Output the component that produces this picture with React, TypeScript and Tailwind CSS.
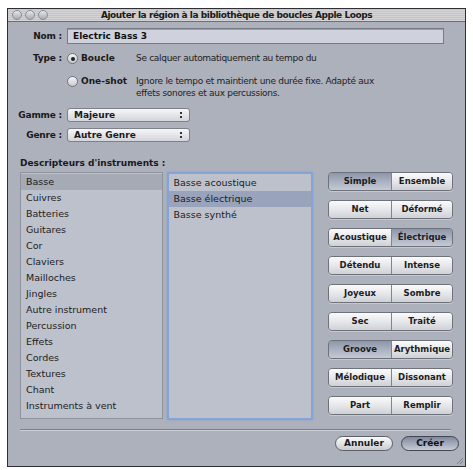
import type { ReactNode } from "react";

const instruments = [
  "Basse",
  "Cuivres",
  "Batteries",
  "Guitares",
  "Cor",
  "Claviers",
  "Mailloches",
  "Jingles",
  "Autre instrument",
  "Percussion",
  "Effets",
  "Cordes",
  "Textures",
  "Chant",
  "Instruments à vent",
];

const subTypes = ["Basse acoustique", "Basse électrique", "Basse synthé"];

// left/right pairs; the number marks which half is pressed (0, 1 or none)
const descriptors: [string, string, number | null][] = [
  ["Simple", "Ensemble", 0],
  ["Net", "Déformé", null],
  ["Acoustique", "Électrique", 1],
  ["Détendu", "Intense", null],
  ["Joyeux", "Sombre", null],
  ["Sec", "Traité", null],
  ["Groove", "Arythmique", 0],
  ["Mélodique", "Dissonant", null],
  ["Part", "Remplir", null],
];

function Label({ children }: { children: ReactNode }) {
  return (
    <span className="flex w-[47px] shrink-0 justify-end whitespace-nowrap pr-[5px] font-bold tracking-[-0.2px] text-[#1a1a1a]">
      {children}
    </span>
  );
}

function Radio({ on }: { on?: boolean }) {
  return (
    <span className="flex h-[11px] w-[11px] shrink-0 items-center justify-center rounded-full border border-[#6f737c] bg-gradient-to-b from-[#f4f4f6] to-[#c9ccd3]">
      {on && <span className="h-[4px] w-[4px] rounded-full bg-[#222]" />}
    </span>
  );
}

function Popup({ value }: { value: string }) {
  return (
    <div className="flex h-[14px] w-[123px] items-center justify-between rounded-[3px] border border-[#7d818a] bg-gradient-to-b from-[#f7f7f9] to-[#d3d5db] pl-[6px] pr-[7px] font-bold text-[#1a1a1a]">
      <span>{value}</span>
      <span className="flex flex-col gap-[2px]">
        <span className="h-[2px] w-[2px] bg-[#333]" />
        <span className="h-[2px] w-[2px] bg-[#333]" />
      </span>
    </div>
  );
}

function Segment({
  left,
  right,
  pressed,
}: {
  left: string;
  right: string;
  pressed: number | null;
}) {
  const half = (on: boolean) =>
    on
      ? "bg-gradient-to-b from-[#8d96aa] via-[#aab1c1] to-[#c4c9d4]"
      : "bg-gradient-to-b from-[#fbfbfc] via-[#e6e7ea] to-[#cfd1d6]";
  return (
    <div className="flex h-[19px] w-[125px] overflow-hidden rounded-[4px] border border-[#6e727b] text-[8.5px] font-bold text-[#1c1c1c] shadow-[0_1px_0_#c5c8d0]">
      <span className={`flex w-[62px] items-center justify-center ${half(pressed === 0)}`}>
        {left}
      </span>
      <span className="w-px bg-[#80848d]" />
      <span className={`flex flex-1 items-center justify-center ${half(pressed === 1)}`}>
        {right}
      </span>
    </div>
  );
}

export default function App() {
  return (
    <div className="h-[470px] w-[473px] overflow-hidden bg-white pl-[7px] pt-[8px] font-['DejaVu_Sans',sans-serif] text-[9px] leading-none">
      <div className="flex h-[459px] w-[459px] flex-col border border-[#2e3036] bg-[#adb1bc]">
        {/* title bar */}
        <div className="relative flex h-[13px] shrink-0 items-center justify-center border-b border-[#6c6f77] bg-[repeating-linear-gradient(0deg,#d3d3d5_0px,#d3d3d5_1px,#c6c6c9_1px,#c6c6c9_2px)] font-bold tracking-[-0.45px] text-[#1a1a1a]">
          <div className="absolute left-[4px] top-[1px] flex gap-[3px]">
            {[0, 1, 2].map((i) => (
              <span
                key={i}
                className="h-[10px] w-[10px] rounded-full border border-[#8a8d94] bg-gradient-to-b from-[#e8e8ea] to-[#a9acb3]"
              />
            ))}
          </div>
          Ajouter la région à la bibliothèque de boucles Apple Loops
        </div>

        <div className="relative flex flex-1 flex-col px-[12px] pt-[6px]">
          {/* nom */}
          <div className="flex items-center">
            <Label>Nom :</Label>
            <div className="flex h-[16px] flex-1 items-center border border-[#777b84] bg-[#cfd2dc] pl-[5px] font-bold text-[#111] shadow-[inset_0_1px_0_#9b9ea6]">
              Electric Bass 3
            </div>
            <span className="w-[9px]" />
          </div>

          {/* type */}
          <div className="mt-[9px] flex items-center">
            <Label>Type :</Label>
            <Radio on />
            <span className="ml-[3px] w-[55px] font-bold text-[#1a1a1a]">Boucle</span>
            <span className="tracking-[-0.3px] text-[#222]">
              Se calquer automatiquement au tempo du
            </span>
          </div>
          <div className="mt-[11px] flex items-start leading-[12px]">
            <span className="w-[47px] shrink-0" />
            <span className="flex h-[12px] items-center">
              <Radio />
            </span>
            <span className="ml-[3px] w-[55px] font-bold text-[#1a1a1a]">One-shot</span>
            <span className="tracking-[-0.3px] text-[#222]">
              Ignore le tempo et maintient une durée fixe. Adapté aux
              <br />
              effets sonores et aux percussions.
            </span>
          </div>

          {/* popups */}
          <div className="mt-[9px] flex items-center">
            <Label>Gamme :</Label>
            <Popup value="Majeure" />
          </div>
          <div className="mt-[6px] flex items-center">
            <Label>Genre :</Label>
            <Popup value="Autre Genre" />
          </div>

          <div className="mt-[17px] font-bold text-[#1a1a1a]">
            Descripteurs d'instruments :
          </div>

          <div className="mt-[4px] flex">
            {/* instrument list */}
            <div className="h-[247px] w-[143px] border border-[#8e929b] bg-[#bdc1cc] pt-px">
              {instruments.map((name, i) => (
                <div
                  key={name}
                  className={`flex h-[16px] items-center pl-[5px] text-[9.5px] text-[#1c1c1c] ${
                    i === 0 ? "bg-[#a6aab5]" : ""
                  }`}
                >
                  {name}
                </div>
              ))}
            </div>

            {/* sub-type list, focused */}
            <div className="ml-[4px] h-[248px] w-[147px] border-2 border-[#86a3d6] bg-[#bdc1cc] pt-px shadow-[0_0_2px_#86a3d6]">
              {subTypes.map((name, i) => (
                <div
                  key={name}
                  className={`flex h-[16px] items-center pl-[5px] text-[9.5px] text-[#1c1c1c] ${
                    i === 1 ? "bg-[#99a3bc]" : ""
                  }`}
                >
                  {name}
                </div>
              ))}
            </div>

            {/* descriptor toggles */}
            <div className="ml-[15px] flex flex-col gap-[9px]">
              {descriptors.map(([l, r, p]) => (
                <Segment key={l} left={l} right={r} pressed={p} />
              ))}
            </div>
          </div>

          <div className="mt-[9px] mr-[2px] h-[2px] border-t border-b border-t-[#7b7f88] border-b-white/40" />

          {/* actions */}
          <div className="mt-[5px] flex justify-end gap-[8px]">
            <button className="h-[15px] w-[58px] rounded-full border border-[#5d6068] bg-gradient-to-b from-[#fafafb] via-[#e3e4e7] to-[#c9cbd0] text-[9px] font-bold text-[#1a1a1a]">
              Annuler
            </button>
            <button className="mr-[-6px] h-[15px] w-[58px] rounded-full border border-[#44474f] bg-gradient-to-b from-[#7f889c] via-[#a3aabb] to-[#c6cbd6] text-[9px] font-bold text-[#111]">
              Créer
            </button>
          </div>

          {/* resize grip */}
          <svg className="absolute bottom-[1px] right-[1px]" width="10" height="10" viewBox="0 0 10 10">
            <path d="M9 3L3 9M9 6L6 9" stroke="#7d8089" strokeWidth="1" />
          </svg>
        </div>
      </div>
    </div>
  );
}
